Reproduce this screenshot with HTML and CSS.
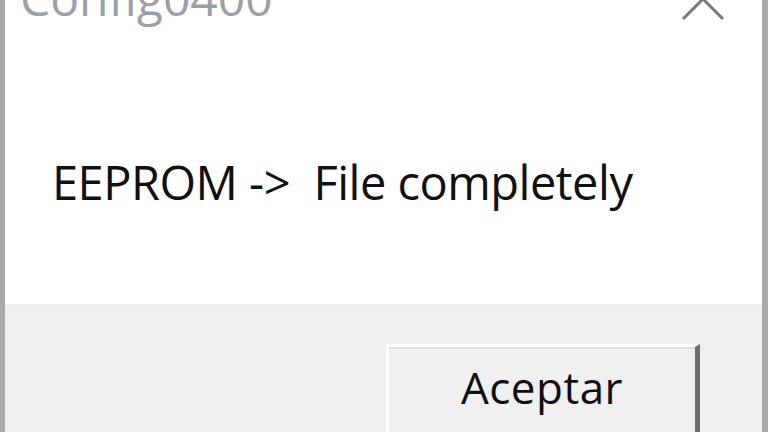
FILE: index.html
```html
<!DOCTYPE html>
<html>
<head>
<meta charset="utf-8">
<link rel="stylesheet" href="styles.css">
</head>
<body>
<div class="window">
  <div class="titlebar">
    <span class="title">Config0400</span>
    <span class="close"><svg width="48" height="30" viewBox="0 0 48 30"><path d="M4 22 L24 2 L44 22" fill="none" stroke="#7a7a7a" stroke-width="3"/></svg></span>
  </div>
  <div class="content">
    <p class="message">EEPROM -&gt;&nbsp; File completely</p>
  </div>
  <div class="footer">
    <button class="btn">Aceptar</button>
  </div>
</div>
</body>
</html>
```
FILE: styles.css
```css
html, body {
  margin: 0;
  padding: 0;
  width: 768px;
  height: 432px;
  overflow: hidden;
  background: #ffffff;
}
.window {
  box-sizing: border-box;
  width: 768px;
  height: 432px;
  display: flex;
  flex-direction: column;
  border-left: 5px solid #a9a9a9;
  border-right: 6px solid #a9a9a9;
  font-family: "Open Sans", "Noto Sans", sans-serif;
  overflow: hidden;
}
.titlebar {
  flex: 0 0 40px;
  display: flex;
  justify-content: space-between;
  align-items: flex-start;
  overflow: hidden;
  background: #fff;
}
.title {
  font-size: 48px;
  line-height: 48px;
  margin-top: -26px;
  margin-left: 15px;
  color: #9aa0aa;
}
.close {
  display: block;
  margin-top: -3px;
  margin-right: 35px;
}
.close svg { display: block; }
.content {
  flex: 0 0 264px;
  background: #fff;
  display: flex;
  align-items: flex-start;
}
.message {
  margin: 112px 0 0 47px;
  font-size: 47px;
  letter-spacing: -0.5px;
  line-height: 60px;
  color: #101010;
  white-space: nowrap;
}
.footer {
  flex: 0 0 auto;
  height: 128px;
  background: #f0f0f0;
  display: flex;
  justify-content: flex-end;
  align-items: flex-start;
  padding: 39px 62px 0 0;
  border-top: 1px solid #ececec;
  box-sizing: border-box;
  overflow: hidden;
}
.btn {
  flex: 0 0 auto;
  box-sizing: border-box;
  width: 314px;
  height: 100px;
  background: #f0f0f0;
  border-top: 3px solid #ffffff;
  border-left: 3px solid #ffffff;
  border-right: 5px solid #6e6e6e;
  border-bottom: 5px solid #6e6e6e;
  box-shadow: inset 0 2px 0 #e0e0e0;
  font-family: "Open Sans", "Noto Sans", sans-serif;
  font-size: 44px;
  letter-spacing: 0.5px;
  color: #101010;
  padding: 10px 0 0 0;
  display: flex;
  justify-content: center;
  align-items: flex-start;
  line-height: 60px;
}
```
